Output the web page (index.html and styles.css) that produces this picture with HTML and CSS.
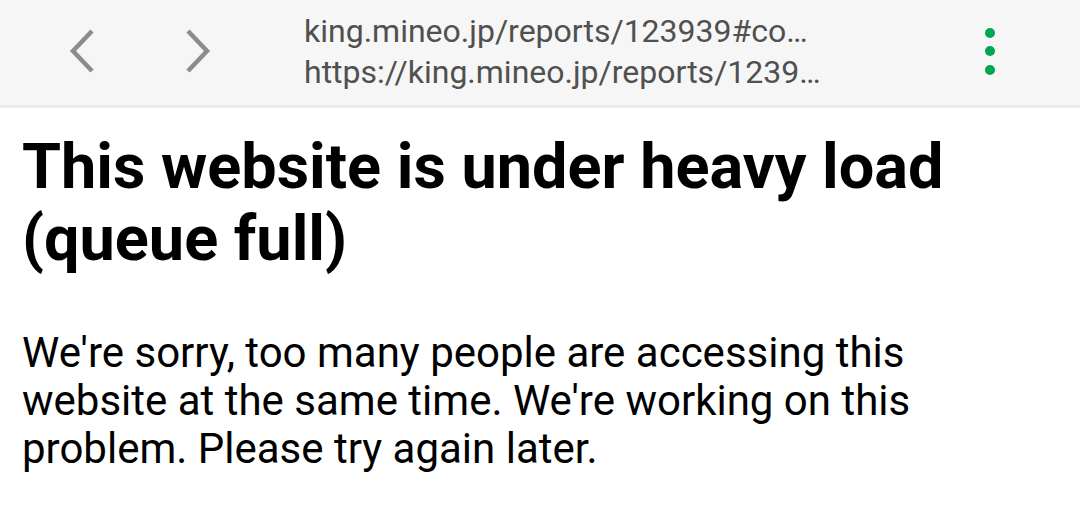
FILE: index.html
```html
<!DOCTYPE html>
<html>
<head>
<meta charset="utf-8">
<link rel="stylesheet" href="styles.css">
</head>
<body>
<header class="toolbar">
  <button class="nav back" aria-label="Back">
    <svg width="26" height="44" viewBox="0 0 26 44"><path d="M23 2 L4 22 L23 42" fill="none" stroke="#8c8c8c" stroke-width="4.5"/></svg>
  </button>
  <button class="nav fwd" aria-label="Forward">
    <svg width="26" height="44" viewBox="0 0 26 44"><path d="M3 2 L22 22 L3 42" fill="none" stroke="#8c8c8c" stroke-width="4.5"/></svg>
  </button>
  <div class="url">
    <div class="title">king.mineo.jp/reports/123939#co…</div>
    <div class="addr">https://king.mineo.jp/reports/1239…</div>
  </div>
  <button class="menu" aria-label="Menu">
    <span class="dot"></span><span class="dot"></span><span class="dot"></span>
  </button>
</header>
<main class="content">
  <h1>This website is under heavy load (queue full)</h1>
  <p>We're sorry, too many people are accessing this website at the same time. We're working on this problem. Please try again later.</p>
</main>
</body>
</html>
```
FILE: styles.css
```css
* { box-sizing: border-box; }
html, body { margin: 0; padding: 0; background: #fff; }
body { font-family: Roboto, "Noto Sans", sans-serif; color: #000; width: 1080px; height: 514px; overflow: hidden; }

.toolbar {
  height: 108px;
  background: #f6f6f6;
  border-bottom: 3px solid #ebebeb;
  display: flex;
  align-items: center;
}
button { background: none; border: 0; padding: 0; margin: 0; cursor: pointer; }
.nav { display: flex; align-items: center; justify-content: center; height: 44px; margin-top: -3px; }
.back { margin-left: 69px; }
.fwd { margin-left: 90px; }
.url { margin-left: 93px; flex: 1; display: flex; flex-direction: column; margin-top: -2px; }
.url div { font-size: 32px; color: #505050; line-height: 41px; white-space: nowrap; }
.menu { width: 12px; margin-right: 84px; display: flex; flex-direction: column; align-items: center; gap: 8.5px; margin-top: -3px; }
.dot { width: 10px; height: 10px; border-radius: 50%; background: #00a651; display: block; }

.content { padding: 0 22px; }
h1 { font-size: 63px; font-weight: 700; line-height: 72px; margin: 23px 0 0; }
p { font-size: 42px; line-height: 48px; margin: 54px 0 0; }
```
